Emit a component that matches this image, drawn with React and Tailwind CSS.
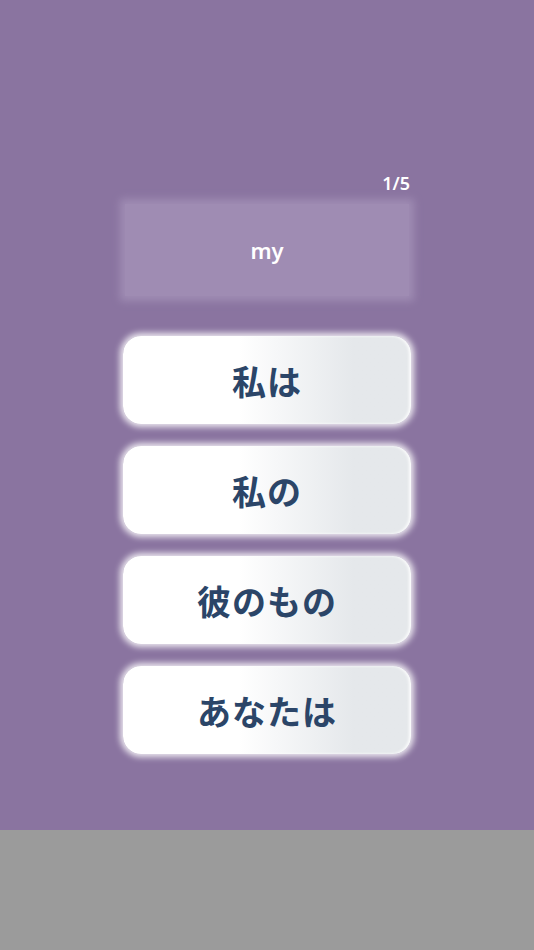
import React from 'react';

const choices = ['私は', '私の', '彼のもの', 'あなたは'];

const App = () => {
  return (
    <div className="w-[534px] h-[950px] flex flex-col bg-[#9b9b9b]" style={{ fontFamily: '"Noto Sans", "Noto Sans CJK JP", sans-serif' }}>
      {/* quiz area */}
      <div className="h-[830px] bg-[#8a74a0] flex flex-col items-center pt-[171px]">
        <div className="w-[290px] flex justify-end pr-[2px]">
          <span className="text-[18px] leading-[24px] font-semibold text-white">1/5</span>
        </div>

        {/* prompt */}
        <div className="mt-[9px] w-[284px] h-[92px] bg-[#9f8cb3] shadow-[0_0_8px_5px_#9f8cb3] flex items-center justify-center">
          <span className="text-[22px] font-semibold text-white">my</span>
        </div>

        {/* choices */}
        <div className="mt-[40px] flex flex-col gap-[22px]">
          {choices.map((c) => (
            <button
              key={c}
              className="w-[288px] h-[88px] rounded-[18px] bg-gradient-to-r from-white from-40% to-[#e5e8eb] to-80% shadow-[0_0_6px_3px_rgba(255,255,255,0.85),inset_-2px_0_3px_rgba(255,255,255,0.9)] flex items-center justify-center"
            >
              <span className="text-[34px] font-bold text-[#2b4568] tracking-[1px]" style={{ fontFamily: '"Noto Sans CJK JP", sans-serif' }}>{c}</span>
            </button>
          ))}
        </div>
      </div>
      <div className="flex-1" />
    </div>
  );
};

export default App;
